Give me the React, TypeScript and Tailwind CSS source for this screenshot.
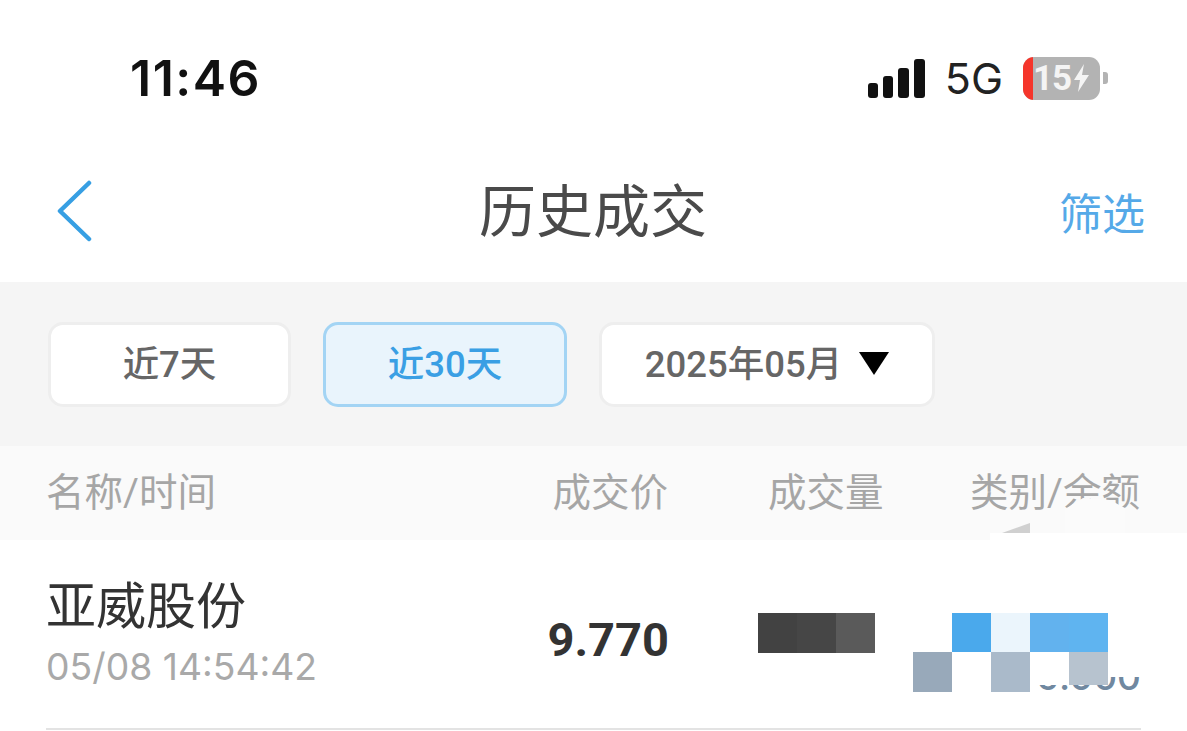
const cjk = "font-['Roboto','Noto_Sans_CJK_SC',sans-serif]";

function SignalBars() {
  return (
    <div className="flex items-end gap-[5px]">
      <div className="h-[15px] w-[10px] rounded-[3px] bg-[#111]" />
      <div className="h-[22px] w-[10px] rounded-[3px] bg-[#111]" />
      <div className="h-[30px] w-[11px] rounded-[3px] bg-[#111]" />
      <div className="h-[39px] w-[11px] rounded-[3px] bg-[#111]" />
    </div>
  );
}

function Battery() {
  return (
    <div className="flex items-center gap-[3px]">
      <div className="flex h-[43px] w-[77px] items-center overflow-hidden rounded-[11px] bg-[#b3b3b3]">
        <div className="h-full w-[10px] bg-[#f5352b]" />
        <span className="text-[35px] leading-none font-bold tracking-[-1px] text-[#f4f4f4] font-['Roboto',sans-serif]">15</span>
        <svg width="19" height="30" viewBox="0 0 19 30" className="ml-[1px]">
          <path d="M12 1 2 17h6l-2 12 11-17h-7z" fill="#f4f4f4" />
        </svg>
      </div>
      <div className="h-[12px] w-[5px] rounded-r-[3px] bg-[#b3b3b3]" />
    </div>
  );
}

function Tab({ label, active, className }: { label: string; active?: boolean; className: string }) {
  return (
    <div
      className={
        active
          ? `flex h-[85px] items-center justify-center rounded-[15px] border-[3px] border-[#a3d4f4] bg-[#e9f4fc] pt-[3px] text-[36.5px] font-medium text-[#3a9fe4] ${className}`
          : `flex h-[85px] items-center justify-center rounded-[15px] border-[3px] border-[#eeeeee] bg-white pt-[3px] text-[36.5px] font-medium text-[#666666] ${className}`
      }
    >
      {label}
    </div>
  );
}

export default function App() {
  return (
    <div className={`h-[731px] w-[1187px] overflow-hidden bg-white ${cjk}`}>
      <div className="flex h-[150px] items-center justify-between pt-[6px] pr-[79px] pl-[130px]">
        <span className="text-[50px] leading-none font-semibold tracking-[1.5px] text-[#111] font-['Inter',sans-serif]">11:46</span>
        <div className="flex items-center gap-[20px]">
          <SignalBars />
          <span className="text-[43px] leading-none text-[#222] font-['Inter',sans-serif]">5G</span>
          <Battery />
        </div>
      </div>

      <div className="grid h-[132px] grid-cols-3 items-center pr-[42px] pl-[56px]">
        <svg width="36" height="62" viewBox="0 0 36 62" fill="none" className="mb-[11px]">
          <path d="M33 3 4 31l29 28" stroke="#379fe3" strokeWidth="4.5" strokeLinecap="round" strokeLinejoin="round" />
        </svg>
        <span className="mr-[15px] mb-[8px] text-center text-[57px] leading-none whitespace-nowrap text-[#4a4a4a]">历史成交</span>
        <span className="mb-[2px] text-right text-[43px] leading-none text-[#55a9e8]">筛选</span>
      </div>

      <div className="flex h-[164px] items-center gap-[32px] bg-[#f5f5f5] pl-[48px]">
        <Tab label="近7天" className="w-[243px]" />
        <Tab label="近30天" active className="w-[244px]" />
        <div className="flex h-[85px] w-[336px] items-center justify-center gap-[17px] rounded-[15px] border-[3px] border-[#eeeeee] bg-white pt-[3px] text-[36.5px] font-medium text-[#666666]">
          2025年05月
          <svg width="30" height="24" viewBox="0 0 30 24" className="mb-[5px]">
            <path d="M0 1h30L15 24z" fill="#000" />
          </svg>
        </div>
      </div>

      <div className="relative flex h-[94px] items-center bg-[#fafafa] px-[46px] text-[38.5px] leading-none whitespace-nowrap text-[#a6a6a6]">
        <span className="flex-1">名称/时间</span>
        <span className="w-[116px] text-right">成交价</span>
        <span className="ml-[100px] w-[116px]">成交量</span>
        <span className="ml-[86px] w-[171px]">类别/余额</span>
        {/* torn edge over the last heading */}
        <svg width="200" height="44" viewBox="0 0 200 44" className="absolute top-[50px] left-[987px]">
          <path d="M78 37V13L96 2l27 2 15 8v25z" fill="#fbfbfb" />
          <path d="M3 37h197v7H3z" fill="#ffffff" />
          <path d="M15 37 43 27v10z" fill="#d0d0d0" />
        </svg>
      </div>

      <div className="relative mx-[46px] flex h-[190px] border-b-2 border-[#e3e3e3] bg-white">
        <div className="flex flex-1 flex-col pt-[36px]">
          <span className="text-[50px] leading-[62px] text-[#333]">亚威股份</span>
          <span className="mt-[5px] text-[37.3px] leading-[48px] text-[#a9a9a9] font-['Inter',sans-serif]">05/08 14:54:42</span>
        </div>
        <span className="mt-[76px] mr-[472px] text-[47px] leading-none font-bold text-[#333] font-['Roboto',sans-serif]">9.770</span>

        <span className="absolute top-[118px] right-0 text-[37px] leading-none font-medium text-[#7088a0] font-['Inter',sans-serif]">9.000</span>

        {/* mosaic over the private figures */}
        <div className="absolute top-[73px] left-[712px] flex">
          <div className="h-[40px] w-[39px] bg-[#424242]" />
          <div className="h-[40px] w-[39px] bg-[#464646]" />
          <div className="h-[40px] w-[39px] bg-[#5a5a5a]" />
        </div>
        <div className="absolute top-[73px] left-[867px] grid grid-cols-[repeat(5,39px)_33px] grid-rows-[39px_40px]">
          <div className="bg-white" />
          <div className="bg-[#4aa9ec]" />
          <div className="bg-[#ebf5fc]" />
          <div className="bg-[#62b2ee]" />
          <div className="bg-[#5fb4f0]" />
          <div className="bg-white" />
          <div className="bg-[#98a9ba]" />
          <div className="bg-white" />
          <div className="bg-[#aabaca]" />
          <div className="h-[33px] bg-white" />
          <div className="h-[33px] bg-[#b7c3cf]" />
          <div className="h-[25px] bg-white" />
        </div>
      </div>
    </div>
  );
}
